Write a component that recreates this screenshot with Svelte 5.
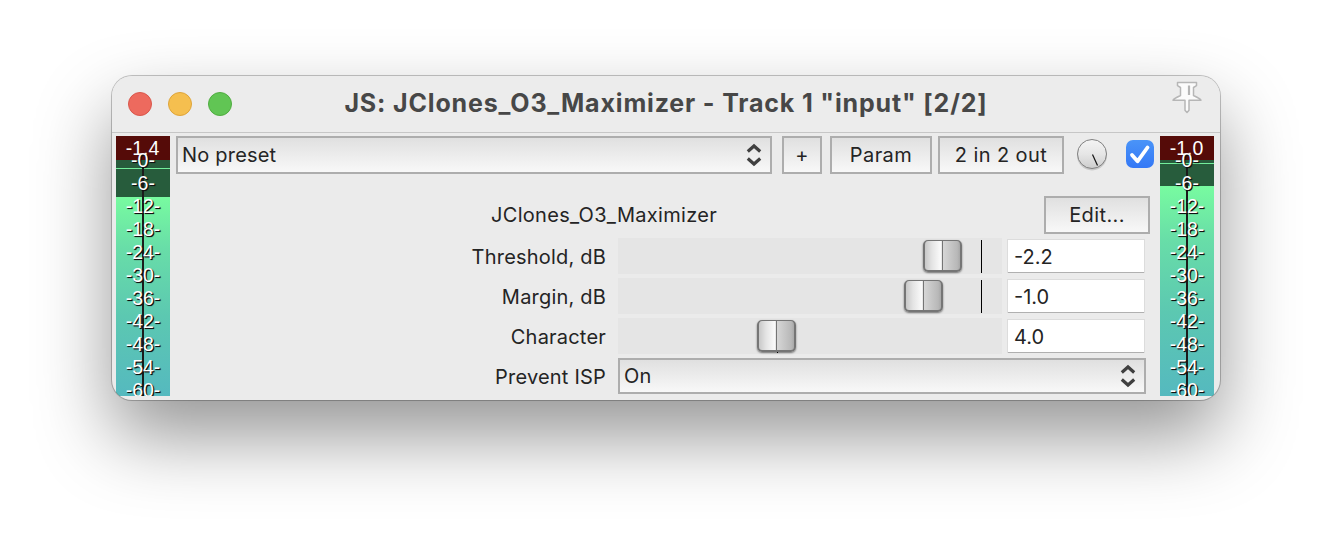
<script>
  const marks = ['-0-', '-6-', '-12-', '-18-', '-24-', '-30-', '-36-', '-42-', '-48-', '-54-', '-60-'];
  const meters = {
    left: { peak: '-1.4', level: 61, hold: 32 },
    right: { peak: '-1.0', level: 50, hold: 27 }
  };
  const sliders = [
    { label: 'Threshold, dB', value: '-2.2', pos: 305, tick: 363 },
    { label: 'Margin, dB', value: '-1.0', pos: 286, tick: 363 },
    { label: 'Character', value: '4.0', pos: 139, tick: 159 }
  ];
</script>

{#snippet meter(m)}
  <div class="meter">
    <div class="level" style="top:{m.level}px"></div>
    <div class="hold" style="top:{m.hold}px"></div>
    <div class="clip"></div>
    <div class="axis"></div>
    <div class="peak">{m.peak}</div>
    <div class="scale">
      {#each marks as mark}<div>{mark}</div>{/each}
    </div>
  </div>
{/snippet}

{#snippet chevrons()}
  <svg class="chev" width="16" height="24" viewBox="0 0 16 24">
    <path d="M1.800 8.500 8 3l6.200 5.500M1.800 15.500 8 21l6.200-5.500" />
  </svg>
{/snippet}

<div class="stage">
  <div class="window">
    <header>
      <div class="lights"><i class="red"></i><i class="yellow"></i><i class="green"></i></div>
      <h1>JS: JClones_O3_Maximizer - Track 1 "input" [2/2]</h1>
      <svg class="pin" width="32" height="34" viewBox="0 0 32 34">
        <path d="M6.500 1.500h19v3.200l-3 1.800v8c3.500 1.500 6 2.500 7.500 4.700H18v10l-2 2.300-2-2.300v-10H2c1.500-2.200 4-3.200 7.500-4.700v-8l-3-1.800z" />
        <path class="slot" d="M18 4.500v9.500" />
      </svg>
    </header>
    <div class="body">
      {@render meter(meters.left)}
      <main>
        <div class="toolbar">
          <div class="box select preset"><span>No preset</span>{@render chevrons()}</div>
          <div class="box plus">+</div>
          <div class="box param">Param</div>
          <div class="box io">2 in 2 out</div>
          <svg class="knob" width="34" height="36" viewBox="0 0 34 36">
            <defs>
              <linearGradient id="kg" x1="0" y1="0" x2="0" y2="1">
                <stop offset="0" stop-color="#f4f4f4" /><stop offset=".5" stop-color="#e6e6e6" /><stop offset="1" stop-color="#cdcdcd" />
              </linearGradient>
            </defs>
            <circle cx="17" cy="18.500" r="15" fill="#bbb" opacity=".7" />
            <circle cx="17" cy="17" r="14.500" fill="url(#kg)" stroke="#808080" />
            <path d="m17.500 17.500 5 11" stroke="#111" stroke-width="1.200" />
          </svg>
          <svg class="check" width="28" height="28" viewBox="0 0 28 28"><path d="m6 15 5.500 6.300L21.500 7.500" /></svg>
        </div>
        <div class="heading">
          <span class="name">JClones_O3_Maximizer</span>
          <div class="box edit">Edit...</div>
        </div>
        {#each sliders as s}
          <div class="row">
            <span class="label">{s.label}</span>
            <div class="track">
              <i class="tick" style="left:{s.tick}px"></i>
              <i class="thumb" style="left:{s.pos}px"></i>
            </div>
            <div class="field">{s.value}</div>
          </div>
        {/each}
        <div class="row">
          <span class="label">Prevent ISP</span>
          <div class="box select isp"><span>On</span>{@render chevrons()}</div>
        </div>
      </main>
      {@render meter(meters.right)}
    </div>
  </div>
</div>

<style>
  :global(body) { background: #fff; overflow: hidden; }
  * { box-sizing: border-box; }
  .stage { width: 1332px; height: 548px; padding: 76px 112px; font: 20px Inter, sans-serif; color: #242424; }
  .window {
    width: 1108px; height: 324px; border-radius: 20px; background: #ebebeb; overflow: hidden;
    box-shadow: 0 0 0 1px rgba(0, 0, 0, .2), 0 0 2px rgba(0, 0, 0, .12), 0 36px 76px rgba(0, 0, 0, .42);
  }
  header {
    height: 57px; border-bottom: 1px solid #c6c6c6; background: #ececec; display: grid;
    grid-template-columns: 150px 1fr 150px; align-items: center; padding: 0 16px;
  }
  .lights { display: flex; gap: 16px; }
  .lights i { width: 24px; height: 24px; border-radius: 50%; border: 1px solid; }
  .lights .red { background: #ed6a5e; border-color: #d9574c; }
  .lights .yellow { background: #f5bf4f; border-color: #dea43a; }
  .lights .green { background: #61c554; border-color: #50ac40; }
  h1 { margin: 0; font-size: 25px; line-height: 30px; font-weight: 700; color: #474747; text-align: center; white-space: nowrap; padding-bottom: 2px; letter-spacing: .84px; }
  .pin { justify-self: end; align-self: start; margin: 5px 1px 0 0; fill: #fbfbfb; stroke: #b6b6b6; stroke-width: 1.500; stroke-linejoin: round; }
  .pin .slot { stroke: #b5b5b5; stroke-width: 2.200; }
  .body { display: grid; grid-template-columns: 54px 1fr 54px; padding: 3px 6px 4px 4px; height: 267px; }
  .meter { position: relative; height: 260px; overflow: hidden; background: #275c3c; font: 19.5px/23px "Liberation Sans", Arial, sans-serif; color: #fff; text-align: center; }
  .level { position: absolute; inset: 0; background: linear-gradient(#78fba0, #68dda8 26%, #5cc8b1 60%, #55b9bf); }
  .hold { position: absolute; left: 0; right: 0; height: 1px; background: #73ee9c; }
  .clip { position: absolute; inset: 0 0 auto; height: 24px; background: #550b08; }
  .axis { position: absolute; left: 26px; top: 32px; bottom: 0; width: 2px; background: #1b1b1b; }
  .peak { position: absolute; top: 1px; left: 0; right: 1px; }
  .scale { position: absolute; top: 13px; left: 0; right: 0; text-shadow: 1px 1px 0 #111, 1px 1px 1px #111; }
  .scale div { height: 23px; }
  main { display: flex; flex-direction: column; padding: 0 6px; }
  .toolbar { display: flex; height: 38px; }
  .box { border: 2px solid #adadad; background: linear-gradient(#e0e0e0, #f8f8f8); display: flex; align-items: center; justify-content: center; height: 38px; letter-spacing: .4px; }
  .select { justify-content: space-between; padding: 0 8px 0 4px; letter-spacing: .2px; }
  .chev { fill: none; stroke: #404040; stroke-width: 3.200; }
  .preset { width: 596px; }
  .plus { width: 40px; margin-left: 10px; }
  .param { width: 102px; margin-left: 8px; }
  .io { width: 126px; margin-left: 6px; }
  .knob { margin: 1px 0 0 11px; }
  .check { margin: 4px 0 0 17px; border-radius: 7px; background: linear-gradient(#4a94f8, #3478f6); fill: none; stroke: #fff; stroke-width: 3.800; stroke-linecap: round; stroke-linejoin: round; }
  .heading { display: grid; grid-template-columns: 1fr 106px; margin: 22px 4px 4px 0; align-items: center; height: 38px; }
  .name { padding-left: 315px; letter-spacing: .3px; }
  .edit { width: 106px; }
  .row { display: grid; grid-template-columns: 430px 12px 384px 6px 136px; height: 36px; margin-bottom: 4px; align-items: center; }
  .label { grid-column: 1; text-align: right; letter-spacing: .2px; padding-top: 2px; }
  .track { grid-column: 3; position: relative; height: 36px; background: #e5e5e5; }
  .field { grid-column: 5; height: 32px; line-height: 34px; padding-left: 6px; background: #fff; box-shadow: 0 1px 0 #b0b0b0, 0 0 0 1px #dcdcdc; }
  .tick { position: absolute; top: 2px; width: 1px; height: 33px; background: #000; }
  .thumb {
    position: absolute; top: 2px; width: 39px; height: 32px; border: 2px solid #757575; border-top-width: 1px; border-radius: 5px;
    background: linear-gradient(90deg, #c8c8c8, #e4e4e4 20%, #fcfcfc 47%, #757575 48%, #757575 51%, #d6d6d6 52%, #b8b8b8 92%, #a8a8a8);
    box-shadow: 0 1px 2px rgba(0, 0, 0, .5);
  }
  .isp { grid-column: 3 / 6; width: 528px; height: 36px; }
</style>
